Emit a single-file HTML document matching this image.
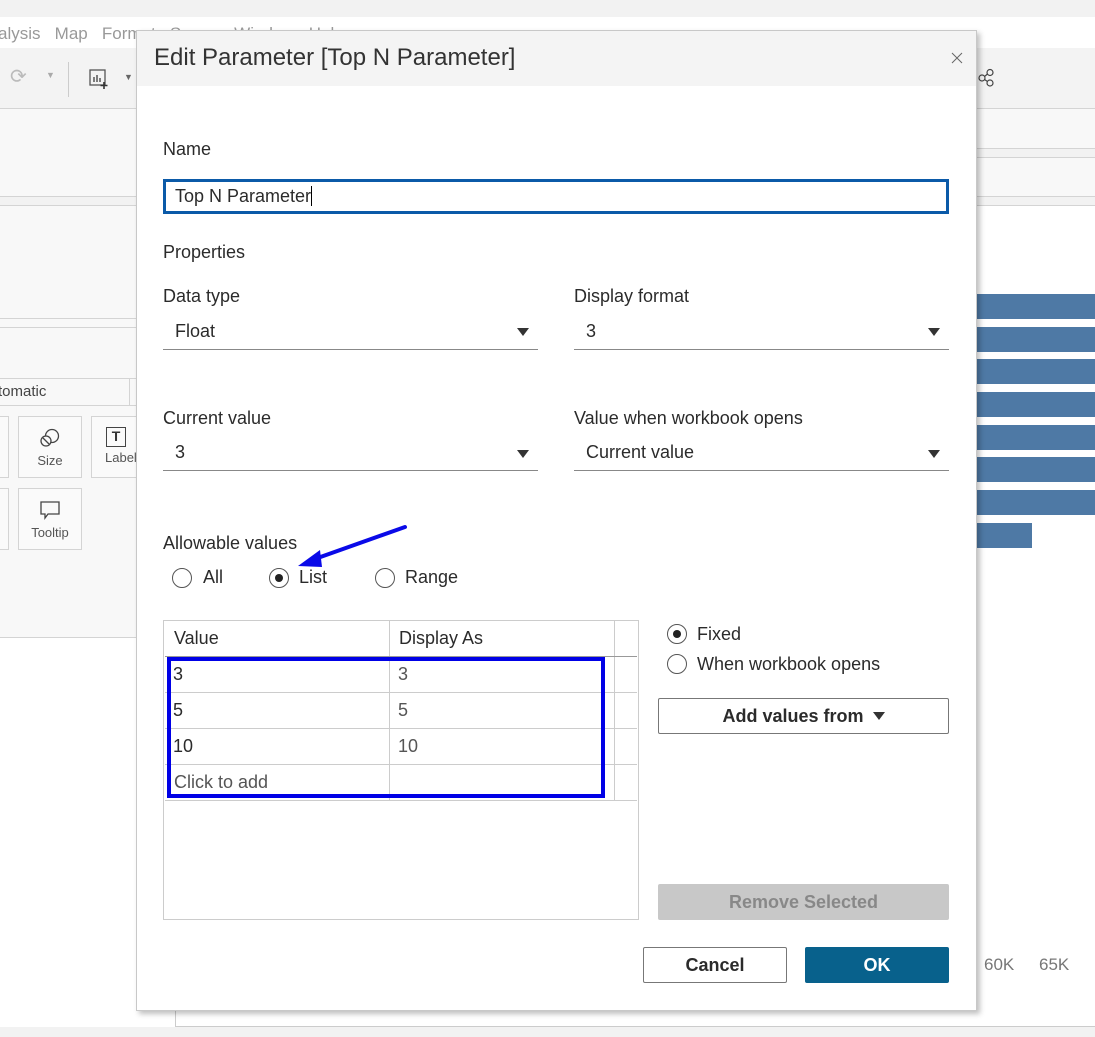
<!DOCTYPE html>
<html><head><style>
*{box-sizing:border-box;margin:0;padding:0}
body{width:1095px;height:1037px;position:relative;overflow:hidden;background:#fff;font-family:"Liberation Sans",sans-serif;color:#333}
.a{position:absolute}
.t{position:absolute;font-size:18px;color:#2b2b2b;white-space:nowrap}
.hl{position:absolute;height:1px;background:#d4d4d4}
.dd{position:absolute;height:1px;background:#888}
.tri{position:absolute;width:0;height:0;border-left:6px solid transparent;border-right:6px solid transparent;border-top:8px solid #333}
.rad{position:absolute;width:20px;height:20px;border:1.5px solid #555;border-radius:50%}
.rad.on::after{content:"";position:absolute;left:4.5px;top:4.5px;width:8px;height:8px;border-radius:50%;background:#222}
.bar{position:absolute;left:976px;height:25px;background:#4e79a5;width:119px}
.card{position:absolute;border:1px solid #d4d4d4;background:#fafafa;font-size:13px;color:#555;text-align:center}
</style></head><body>
<div class="a" style="left:0;top:0;width:1095px;height:17px;background:#f2f2f2"></div>
<div class="t" style="left:-2px;top:24px;color:#999;font-size:17px">alysis&nbsp;&nbsp;&nbsp;Map&nbsp;&nbsp;&nbsp;Format&nbsp;&nbsp;&nbsp;Server&nbsp;&nbsp;&nbsp;Window&nbsp;&nbsp;&nbsp;Help</div>
<div class="a" style="left:0;top:48px;width:1095px;height:60px;background:#f3f3f3"></div>
<div class="t" style="left:10px;top:64px;color:#bbb;font-size:20px">⟳</div>
<div class="t" style="left:46px;top:70px;color:#aaa;font-size:9px">▼</div>
<div class="a" style="left:68px;top:62px;width:1px;height:35px;background:#ccc"></div>
<svg class="a" style="left:88px;top:68px" width="22" height="22"><rect x="2" y="2" width="15" height="15" fill="none" stroke="#555" stroke-width="1.3"/><path d="M6 14V9M9 14V7M12 14V10" stroke="#555" stroke-width="1.5"/><path d="M16 14v7M12.5 17.5h7" stroke="#333" stroke-width="1.6"/></svg>
<div class="t" style="left:124px;top:72px;color:#666;font-size:9px">▼</div>
<svg class="a" style="left:978px;top:68px" width="18" height="20"><circle cx="4" cy="10" r="3" fill="none" stroke="#444" stroke-width="1.2"/><circle cx="12" cy="4.5" r="3" fill="none" stroke="#444" stroke-width="1.2"/><circle cx="12" cy="15" r="3" fill="none" stroke="#444" stroke-width="1.2"/><path d="M6.5 8.5l3-2.5M6.5 11.5l3 2" stroke="#444" stroke-width="1.2"/></svg>
<div class="hl" style="left:0;top:108px;width:1095px"></div>
<div class="a" style="left:0;top:109px;width:136px;height:87px;background:#f8f8f8"></div>
<div class="a" style="left:976px;top:109px;width:119px;height:39px;background:#f8f8f8"></div>
<div class="hl" style="left:976px;top:148px;width:119px"></div>
<div class="a" style="left:976px;top:149px;width:119px;height:8px;background:#f2f2f2"></div>
<div class="hl" style="left:976px;top:157px;width:119px"></div>
<div class="a" style="left:976px;top:158px;width:119px;height:38px;background:#f8f8f8"></div>
<div class="hl" style="left:0;top:196px;width:1095px"></div>
<div class="a" style="left:0;top:197px;width:1095px;height:8px;background:#f2f2f2"></div>
<div class="hl" style="left:0;top:205px;width:1095px"></div>
<div class="a" style="left:0;top:206px;width:136px;height:432px;background:#f8f8f8"></div>
<div class="hl" style="left:0;top:318px;width:136px"></div>
<div class="hl" style="left:0;top:327px;width:136px"></div>
<div class="hl" style="left:0;top:378px;width:136px"></div>
<div class="a" style="left:129px;top:378px;width:1px;height:27px;background:#d4d4d4"></div>
<div class="t" style="left:-2px;top:383px;font-size:15px;color:#444">tomatic</div>
<div class="hl" style="left:0;top:405px;width:136px"></div>
<div class="card" style="left:-10px;top:416px;width:19px;height:62px"></div>
<div class="card" style="left:18px;top:416px;width:64px;height:62px"><svg style="margin-top:10px" width="24" height="22"><circle cx="14" cy="9" r="6.5" fill="none" stroke="#444" stroke-width="1.3"/><circle cx="8" cy="14" r="5" fill="#fafafa" stroke="#444" stroke-width="1.3"/><path d="M5 11l6 6" stroke="#444" stroke-width="1.3"/></svg><div style="margin-top:1px">Size</div></div>
<div class="card" style="left:91px;top:416px;width:60px;height:62px;text-align:left;padding-left:14px"><div style="margin-top:10px;width:20px;height:20px;border:1.4px solid #444;font-size:14px;text-align:center;line-height:17px;color:#333;font-weight:bold">T</div><div style="margin-top:3px;margin-left:-1px">Label</div></div>
<div class="card" style="left:-10px;top:488px;width:19px;height:62px"></div>
<div class="card" style="left:18px;top:488px;width:64px;height:62px"><svg style="margin-top:10px" width="24" height="22"><path d="M3 3h18v12H10l-3 4v-4H3z" fill="none" stroke="#444" stroke-width="1.3"/></svg><div style="margin-top:1px">Tooltip</div></div>
<div class="hl" style="left:0;top:637px;width:136px"></div>
<div class="a" style="left:0;top:638px;width:136px;height:399px;background:#fff"></div>
<div class="bar" style="top:294px"></div><div class="bar" style="top:327px"></div><div class="bar" style="top:359px"></div><div class="bar" style="top:392px"></div><div class="bar" style="top:425px"></div><div class="bar" style="top:457px"></div><div class="bar" style="top:490px"></div><div class="bar" style="top:523px;width:56px"></div>
<div class="t" style="left:984px;top:955px;font-size:17px;color:#777">60K</div>
<div class="t" style="left:1039px;top:955px;font-size:17px;color:#777">65K</div>
<div class="a" style="left:175px;top:1005px;width:1px;height:22px;background:#ccc"></div>
<div class="hl" style="left:175px;top:1026px;width:920px;background:#ccc"></div>
<div class="a" style="left:0;top:1027px;width:1095px;height:10px;background:#f2f2f2"></div>
<div class="a" style="left:136px;top:30px;width:841px;height:981px;background:#fff;border:1px solid #c8c8c8;box-shadow:3px 3px 5px rgba(0,0,0,.25)"></div>
<div class="a" style="left:137px;top:31px;width:839px;height:55px;background:#f4f4f4"></div>
<div class="t" style="left:154px;top:44px;font-size:24px;color:#333">Edit Parameter [Top N Parameter]</div>
<svg class="a" style="left:951px;top:52px" width="12" height="12"><path d="M1 1l10 10M11 1L1 11" stroke="#666" stroke-width="1"/></svg>
<div class="t" style="left:163px;top:139px">Name</div>
<div class="a" style="left:163px;top:179px;width:786px;height:35px;border:3px solid #0b5aa8"></div>
<div class="t" style="left:175px;top:186px">Top N Parameter<span style="display:inline-block;width:1px;height:20px;background:#000;vertical-align:-4px"></span></div>
<div class="t" style="left:163px;top:242px">Properties</div>
<div class="t" style="left:163px;top:286px">Data type</div>
<div class="t" style="left:175px;top:321px">Float</div><div class="tri" style="left:517px;top:328px"></div><div class="dd" style="left:163px;top:349px;width:375px"></div>
<div class="t" style="left:574px;top:286px">Display format</div>
<div class="t" style="left:586px;top:321px">3</div><div class="tri" style="left:928px;top:328px"></div><div class="dd" style="left:574px;top:349px;width:375px"></div>
<div class="t" style="left:163px;top:408px">Current value</div>
<div class="t" style="left:175px;top:442px">3</div><div class="tri" style="left:517px;top:450px"></div><div class="dd" style="left:163px;top:470px;width:375px"></div>
<div class="t" style="left:574px;top:408px">Value when workbook opens</div>
<div class="t" style="left:586px;top:442px">Current value</div><div class="tri" style="left:928px;top:450px"></div><div class="dd" style="left:574px;top:470px;width:375px"></div>
<div class="t" style="left:163px;top:533px">Allowable values</div>
<div class="rad" style="left:172px;top:568px"></div><div class="t" style="left:203px;top:567px">All</div>
<div class="rad on" style="left:269px;top:568px"></div><div class="t" style="left:299px;top:567px">List</div>
<div class="rad" style="left:375px;top:568px"></div><div class="t" style="left:405px;top:567px">Range</div>
<svg class="a" style="left:290px;top:522px" width="120" height="50"><path d="M115 5L22 38" stroke="#0a0ae8" stroke-width="4" stroke-linecap="round"/><path d="M8 44L30 28L32 45Z" fill="#0a0ae8"/></svg>
<div class="a" style="left:163px;top:620px;width:476px;height:300px;border:1px solid #ccc"></div>
<div class="a" style="left:389px;top:621px;width:1px;height:180px;background:#ccc"></div>
<div class="a" style="left:614px;top:621px;width:1px;height:180px;background:#ccc"></div>
<div class="a" style="left:165px;top:656px;width:472px;height:1px;background:#999"></div>
<div class="hl" style="left:165px;top:692px;width:472px;background:#ccc"></div>
<div class="hl" style="left:165px;top:728px;width:472px;background:#ccc"></div>
<div class="hl" style="left:165px;top:764px;width:472px;background:#ccc"></div>
<div class="hl" style="left:165px;top:800px;width:472px;background:#ccc"></div>
<div class="t" style="left:174px;top:628px">Value</div><div class="t" style="left:399px;top:628px">Display As</div>
<div class="t" style="left:173px;top:664px">3</div><div class="t" style="left:398px;top:664px;color:#555">3</div>
<div class="t" style="left:173px;top:700px">5</div><div class="t" style="left:398px;top:700px;color:#555">5</div>
<div class="t" style="left:173px;top:736px">10</div><div class="t" style="left:398px;top:736px;color:#555">10</div>
<div class="t" style="left:174px;top:772px;color:#555">Click to add</div>
<div class="a" style="left:167px;top:657px;width:438px;height:141px;border:4px solid #0000e6"></div>
<div class="rad on" style="left:667px;top:624px"></div><div class="t" style="left:697px;top:624px">Fixed</div>
<div class="rad" style="left:667px;top:654px"></div><div class="t" style="left:697px;top:654px">When workbook opens</div>
<div class="a" style="left:658px;top:698px;width:291px;height:36px;border:1px solid #777;border-radius:2px;text-align:center;font-size:18px;line-height:34px;font-weight:bold;color:#2b2b2b">Add values from <span style="display:inline-block;width:0;height:0;border-left:6px solid transparent;border-right:6px solid transparent;border-top:8px solid #333;vertical-align:2px;margin-left:4px"></span></div>
<div class="a" style="left:658px;top:884px;width:291px;height:36px;background:#c8c8c8;border-radius:2px;text-align:center;font-size:18px;line-height:36px;font-weight:bold;color:#888">Remove Selected</div>
<div class="a" style="left:643px;top:947px;width:144px;height:36px;border:1px solid #777;border-radius:2px;text-align:center;font-size:18px;line-height:34px;font-weight:bold;color:#2b2b2b">Cancel</div>
<div class="a" style="left:805px;top:947px;width:144px;height:36px;background:#08618c;border-radius:2px;text-align:center;font-size:18px;line-height:36px;font-weight:bold;color:#fff">OK</div>
</body></html>
